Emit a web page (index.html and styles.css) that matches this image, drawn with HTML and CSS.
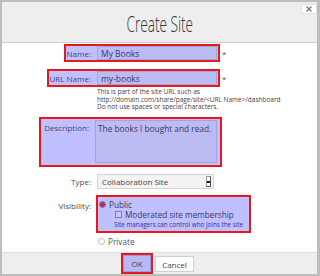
FILE: index.html
```html
<!DOCTYPE html>
<html lang="en">
<head>
    <meta charset="UTF-8">
    <title>Create Site</title>
    <link rel="stylesheet" href="styles.css">
</head>
<body>
    <div class="dialog">
        <div class="head">
            <h1 class="title">Create Site</h1>
            <button class="close" type="button">
                <svg width="6" height="6" viewBox="0 0 6 6"><path d="M0.5 0.5L5.5 5.5M5.5 0.5L0.5 5.5" stroke="#777" stroke-width="1.3"/></svg>
            </button>
        </div>
        <div class="body">
            <div class="row">
                <div class="main">
                    <div class="hl">
                        <label>Name:</label>
                        <input class="field" type="text" value="My Books">
                    </div>
                </div>
                <span class="req">*</span>
            </div>
            <div class="row row-url">
                <div class="main">
                    <div class="hl">
                        <label>URL Name:</label>
                        <input class="field" type="text" value="my-books">
                    </div>
                </div>
                <span class="req">*</span>
            </div>
            <div class="help">
                This is part of the site URL such as<br>
                http://domain.com/share/page/site/&lt;URL Name&gt;/dashboard<br>
                Do not use spaces or special characters.
            </div>
            <div class="row row-desc">
                <div class="main">
                    <div class="hl hl-desc">
                        <label>Description:</label>
                        <textarea class="field area">The books I bought and read.</textarea>
                    </div>
                </div>
            </div>
            <div class="plain row-type">
                <label>Type:</label>
                <div class="select">
                    <span>Collaboration Site</span>
                    <span class="arrow"></span>
                </div>
            </div>
            <div class="plain row-vis">
                <label>Visibility:</label>
                <div class="hl hl-vis">
                    <div class="opt"><span class="radio on"></span>Public</div>
                    <div class="opt sub"><span class="check"></span>Moderated site membership</div>
                    <div class="note">Site managers can control who joins the site</div>
                </div>
            </div>
            <div class="plain row-private">
                <span></span>
                <div class="opt"><span class="radio"></span>Private</div>
            </div>
        </div>
        <div class="foot">
            <div class="ok-box"><button class="btn ok" type="button">OK</button></div>
            <button class="btn cancel" type="button">Cancel</button>
        </div>
    </div>
</body>
</html>
```

FILE: styles.css
```css
body {
    margin: 0;
    font-family: "Open Sans", sans-serif;
}
.dialog {
    width: 320px;
    height: 276px;
    box-sizing: border-box;
    border: 2px solid #bdbdbd;
    border-right-width: 3px;
    background: #fff;
    display: flex;
    flex-direction: column;
    position: relative;
}
.head {
    height: 40px;
    flex: none;
    background: #eeeeee;
    border-bottom: 1px solid #cfcfcf;
    display: flex;
    align-items: center;
    justify-content: center;
}
.title {
    margin: 1px 0 0;
    font-size: 22px;
    font-weight: 300;
    line-height: 1;
    color: #333;
    transform: scaleX(0.62);
}
.close {
    position: absolute;
    top: 2px;
    right: 0;
    width: 16px;
    height: 10px;
    padding: 0;
    background: #fff;
    border: 1px solid #e2e2e2;
    display: flex;
    align-items: center;
    justify-content: center;
}
.body {
    flex: 1;
    padding-top: 1px;
}
label {
    font-size: 8px;
    color: #4d4d4d;
}
.row {
    display: flex;
    align-items: center;
}
.main {
    width: 218px;
    display: flex;
    justify-content: flex-end;
}
.hl {
    display: flex;
    align-items: center;
    gap: 6px;
    border: 2px solid #e8191e;
    background: #c0c0ff;
    padding: 0 1px;
}
.hl label {
    color: #45457a;
}
.req {
    margin-left: 2px;
    font-size: 8px;
    color: #555;
}
.field {
    box-sizing: border-box;
    width: 120px;
    height: 14px;
    margin: 0;
    padding: 0 3px;
    border: 1px solid #a4a4dc;
    background: #bcbcf3;
    font-family: "Open Sans", sans-serif;
    font-size: 8.5px;
    color: #37376c;
    outline: none;
}
.row-url {
    margin-top: 7px;
}
.help {
    margin: 1px 0 0 95px;
    font-size: 6.5px;
    line-height: 7.5px;
    color: #444;
}
.row-desc {
    margin-top: 6px;
}
.hl-desc {
    align-items: flex-start;
    padding: 1px 3px 2px 3px;
    margin-right: -2px;
}
.hl-desc label {
    padding-top: 2px;
}
.area {
    width: 122px;
    height: 43px;
    padding: 2px 2px;
    font-size: 8.3px;
    line-height: 11px;
    resize: none;
}
.plain {
    display: grid;
    grid-template-columns: 89px auto;
    column-gap: 6px;
    align-items: center;
}
.plain label {
    text-align: right;
}
.row-type {
    margin-top: 7px;
}
.select {
    box-sizing: border-box;
    width: 117px;
    height: 15px;
    border: 1px solid #d4d4d4;
    background: #f3f3f3;
    display: flex;
    align-items: center;
    justify-content: space-between;
    padding: 0 2px 0 4px;
    font-size: 8px;
    color: #444;
}
.arrow {
    width: 3px;
    height: 9px;
    border: 1px solid #9a9a9a;
    border-right-color: #555;
    border-bottom-color: #555;
    background: #f8f8f8;
    position: relative;
}
.arrow::after {
    content: "";
    position: absolute;
    left: 0;
    top: 4px;
    width: 3px;
    height: 2px;
    background: #111;
}
.row-vis {
    margin-top: 6px;
    column-gap: 5px;
    align-items: start;
}
.row-vis label {
    padding-top: 5px;
}
.hl-vis {
    width: 148px;
    flex-direction: column;
    align-items: flex-start;
    gap: 0;
    padding: 3px 2px 2px 1px;
}
.opt {
    display: flex;
    align-items: center;
    gap: 3px;
    font-size: 8.2px;
    line-height: 10px;
    color: #37376c;
}
.sub {
    margin-left: 16px;
}
.radio {
    width: 5px;
    height: 5px;
    border: 1px solid #b9b9b9;
    border-radius: 50%;
    background: #fff;
}
.radio.on {
    border-color: #b96a8c;
    background: #9c3c63;
}
.check {
    width: 5px;
    height: 5px;
    border: 1px solid #7f7f9a;
    background: #c8c8ff;
}
.note {
    margin-left: 15px;
    font-size: 6.3px;
    line-height: 9px;
    color: #333399;
}
.row-private {
    margin-top: 4px;
}
.row-private .opt {
    color: #555;
    margin-left: 1px;
}
.foot {
    height: 21px;
    flex: none;
    background: #eeeeee;
    border-top: 1px solid #dddddd;
    display: flex;
    justify-content: center;
    align-items: flex-start;
    gap: 2px;
    padding-right: 4px;
}
.ok-box {
    border: 2px solid #e8191e;
}
.btn {
    display: block;
    margin: 0;
    padding: 0;
    font-family: "Open Sans", sans-serif;
    font-size: 8px;
    color: #444;
}
.ok {
    width: 28px;
    height: 17px;
    background: #b8b8f6;
    border: 1px solid #9c9cd6;
}
.cancel {
    width: 39px;
    height: 16px;
    margin-top: 3px;
    background: #fff;
    border: 1px solid #cfcfcf;
}
```
